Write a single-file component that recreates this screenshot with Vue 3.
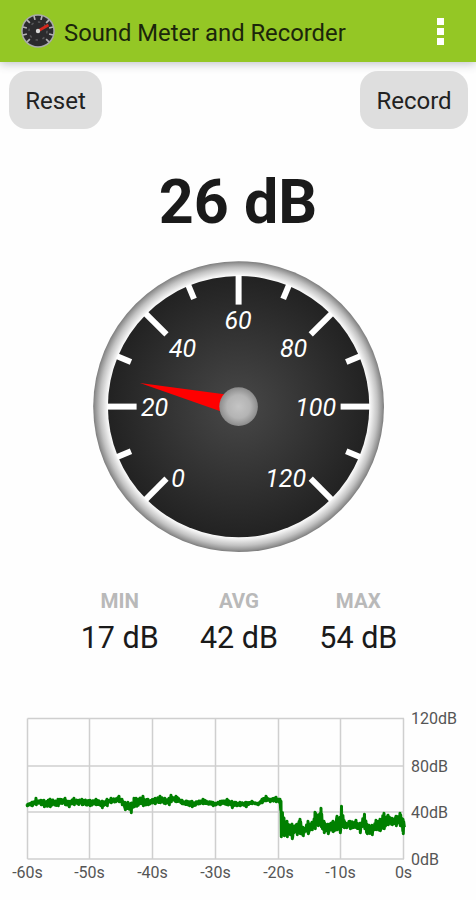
<template>
  <div class="app">
    <header class="toolbar">
      <svg class="logo" viewBox="0 0 36 36">
        <circle cx="18" cy="18" r="16.8" fill="#a9aaa9" />
        <circle cx="18" cy="18" r="15.3" fill="#2b2b2d" />
        <line
          v-for="a in logoTicks"
          :key="a"
          x1="18"
          y1="2.5"
          x2="18"
          y2="6.5"
          stroke="#b4b4b4"
          stroke-width="1.7"
          :transform="`rotate(${a} 18 18)`"
        />
        <circle cx="18" cy="18" r="9" fill="none" stroke="#58585a" stroke-width="1.5" stroke-dasharray="2.5 4.5" />
        <path d="M18 18 L28.5 12" stroke="#d5281c" stroke-width="2.6" />
        <circle cx="18" cy="18" r="2.2" fill="#d8d8d8" />
      </svg>
      <h1 class="title">Sound Meter and Recorder</h1>
      <div class="menu">
        <span></span>
        <span></span>
        <span></span>
      </div>
    </header>

    <div class="actions">
      <button class="btn">Reset</button>
      <button class="btn record">Record</button>
    </div>

    <div class="level">{{ level }} dB</div>

    <svg class="gauge" viewBox="-146.6 -146.6 292 292">
      <defs>
        <radialGradient id="rim" gradientUnits="userSpaceOnUse" cx="0" cy="0" r="145.4">
          <stop offset="0.895" stop-color="#ffffff" />
          <stop offset="0.915" stop-color="#ececec" />
          <stop offset="0.955" stop-color="#c2c2c2" />
          <stop offset="0.985" stop-color="#969696" />
          <stop offset="1" stop-color="#7c7c7c" />
        </radialGradient>
        <radialGradient id="face" gradientUnits="userSpaceOnUse" cx="0" cy="0" r="131">
          <stop offset="0" stop-color="#484848" />
          <stop offset="1" stop-color="#222222" />
        </radialGradient>
        <radialGradient id="hub">
          <stop offset="0" stop-color="#c4c4c4" />
          <stop offset="0.6" stop-color="#b4b4b4" />
          <stop offset="1" stop-color="#8c8c8c" />
        </radialGradient>
      </defs>
      <circle r="145.4" fill="url(#rim)" />
      <circle r="130.7" fill="url(#face)" />
      <line
        v-for="t in ticks"
        :key="t.angle"
        x1="0"
        x2="0"
        y1="-131.5"
        :y2="t.major ? -102 : -116.5"
        stroke="#fff"
        stroke-width="6"
        :transform="`rotate(${t.angle})`"
      />
      <text v-for="l in labels" :key="l.text" class="mark" :x="l.x" :y="l.y">{{ l.text }}</text>
      <path d="M0 -101.5 L10.5 0 L-10.5 0 Z" fill="#f00" :transform="`rotate(${needle})`" />
      <circle r="19.3" fill="url(#hub)" />
    </svg>

    <div class="stats">
      <div v-for="s in stats" :key="s.name" class="stat">
        <div class="stat-name">{{ s.name }}</div>
        <div class="stat-value">{{ s.value }} dB</div>
      </div>
    </div>

    <svg class="chart" viewBox="0 700 476 200">
      <g stroke="#cfcfcf" stroke-width="1.5">
        <line v-for="x in gridX" :key="'x' + x.pos" :x1="x.pos" :x2="x.pos" y1="718.5" y2="859" />
        <line v-for="y in gridY" :key="'y' + y.pos" x1="27.5" x2="404" :y1="y.pos" :y2="y.pos" />
      </g>
      <polyline :points="trace" fill="none" stroke="#008000" stroke-width="3" stroke-linejoin="round" />
      <text v-for="x in gridX" :key="x.text" class="axis middle" :x="x.pos" y="878">{{ x.text }}</text>
      <text v-for="y in gridY" :key="y.text" class="axis" x="411" :y="y.pos + 5.7">{{ y.text }}</text>
    </svg>
  </div>
</template>

<script setup>
import { computed, ref } from 'vue';

const level = ref(26);

const stats = [
  { name: 'MIN', value: 17 },
  { name: 'AVG', value: 42 },
  { name: 'MAX', value: 54 },
];

// 0 dB sits at -135 degrees, 120 dB at +135
const needle = computed(() => -135 + level.value * 2.25);

const ticks = Array.from({ length: 13 }, (_, i) => ({
  angle: -135 + i * 22.5,
  major: i % 2 === 0,
}));

const logoTicks = [-135, -105, -75, -45, -15, 15, 45, 75, 105, 135];

const labels = [
  { text: '0', x: -60.5, y: 80 },
  { text: '20', x: -84, y: 9 },
  { text: '40', x: -56, y: -50 },
  { text: '60', x: -0.5, y: -78 },
  { text: '80', x: 55, y: -50 },
  { text: '100', x: 77, y: 9 },
  { text: '120', x: 47, y: 80 },
];

const gridX = [
  { pos: 27.5, text: '-60s' },
  { pos: 89.5, text: '-50s' },
  { pos: 152.5, text: '-40s' },
  { pos: 215.5, text: '-30s' },
  { pos: 278.5, text: '-20s' },
  { pos: 340.5, text: '-10s' },
  { pos: 403.5, text: '0s' },
];

const gridY = [
  { pos: 718.5, text: '120dB' },
  { pos: 766, text: '80dB' },
  { pos: 812, text: '40dB' },
  { pos: 859, text: '0dB' },
];

// x, highest and lowest reading around it
const envelope = [
  [27, 803, 807], [32, 801, 807], [36, 797, 806], [41, 799, 806], [44, 799, 808], [50, 798, 808],
  [58, 798, 807], [65, 797, 806], [69, 800, 808], [74, 797, 806], [82, 798, 806], [90, 799, 807],
  [96, 798, 806], [102, 800, 809], [107, 798, 807], [111, 797, 804], [119, 795, 803], [122, 798, 806],
  [125, 801, 811], [128, 801, 810], [131, 802, 814], [134, 797, 808], [143, 795, 807], [148, 798, 806],
  [155, 797, 805], [160, 795, 804], [169, 797, 806], [171, 794, 803], [176, 795, 803], [182, 799, 805],
  [192, 800, 808], [203, 798, 805], [213, 801, 807], [220, 800, 806], [227, 798, 806], [232, 800, 809],
  [240, 801, 807], [246, 801, 808], [252, 800, 805], [258, 802, 806], [262, 798, 804], [266, 795, 802],
  [270, 798, 803], [276, 796, 803], [280, 798, 805], [281, 800, 838], [284, 817, 837], [287, 820, 838],
  [290, 824, 836], [292, 823, 840], [297, 823, 836], [300, 818, 835], [303, 826, 837], [308, 820, 835],
  [312, 821, 831], [315, 811, 830], [318, 814, 827], [321, 807, 828], [324, 820, 834], [328, 823, 835],
  [333, 820, 833], [337, 815, 831], [340, 816, 834], [341.5, 805, 828], [344, 819, 829], [350, 820, 830],
  [356, 819, 829], [360, 822, 834], [364.5, 813, 830], [367, 823, 835], [372, 824, 836], [376, 819, 831],
  [380, 818, 832], [384, 812, 830], [388, 814, 826], [392, 817, 826], [396, 815, 827], [400, 812, 827],
  [403, 818, 835], [404.5, 821, 830],
];

const trace = computed(() => {
  const points = [];
  let seed = 11;
  let up = true;
  for (let i = 0; i < envelope.length - 1; i++) {
    const [x1, top1, low1] = envelope[i];
    const [x2, top2, low2] = envelope[i + 1];
    points.push(`${x1},${top1 + 1.2}`, `${x1 + 0.3},${low1 - 1.2}`);
    for (let x = x1 + 0.7; x < x2; x += 0.7) {
      const k = (x - x1) / (x2 - x1);
      seed = (seed * 1103 + 377) % 9973;
      const top = top1 + (top2 - top1) * k + 1.5;
      const low = low1 + (low2 - low1) * k - 1.5;
      const shift = (seed / 9973) * (low - top) * 0.4;
      points.push(`${x.toFixed(1)},${(up ? top + shift : low - shift).toFixed(1)}`);
      up = !up;
    }
  }
  return points.join(' ');
});
</script>

<style>
body {
  margin: 0;
  background: #fefefe;
}
</style>

<style scoped>
.app {
  display: flex;
  flex-direction: column;
  width: 476px;
  height: 900px;
  overflow: hidden;
  background: #fefefe;
  color: #1a1a1a;
  font-family: Roboto, "Liberation Sans", sans-serif;
}

.toolbar {
  display: flex;
  align-items: center;
  flex: none;
  box-sizing: border-box;
  height: 62px;
  padding: 0 32px 0 20px;
  background: #94c725;
  box-shadow: 0 2px 9px rgba(50, 60, 80, 0.3);
}

.logo {
  width: 36px;
  height: 36px;
}

.title {
  margin: 3px 0 0 8px;
  font-size: 23.8px;
  font-weight: 400;
  line-height: 30px;
  white-space: nowrap;
  color: #1b260b;
}

.menu {
  display: flex;
  flex-direction: column;
  gap: 3px;
  margin-left: auto;
}

.menu span {
  width: 7px;
  height: 7px;
  background: #fff;
}

.actions {
  display: flex;
  justify-content: space-between;
  flex: none;
  padding: 9px 8px 0 9px;
}

.btn {
  width: 93px;
  height: 58px;
  padding: 2px 0 0;
  border: none;
  border-radius: 18px;
  background: #dedede;
  color: #222;
  font-family: inherit;
  font-size: 24px;
}

.record {
  width: 108px;
}

.level {
  flex: none;
  margin-top: 38px;
  font-size: 61px;
  font-weight: 700;
  line-height: 70px;
  text-align: center;
}

.gauge {
  flex: none;
  align-self: center;
  width: 292px;
  height: 292px;
  margin-top: 23px;
}

.mark {
  fill: #fff;
  font-size: 25px;
  font-style: italic;
  text-anchor: middle;
}

.stats {
  display: flex;
  flex: none;
  margin-top: 35px;
  padding: 0 58px 0 60px;
}

.stat {
  flex: 1;
  text-align: center;
}

.stat-name {
  color: #b9b9b9;
  font-size: 20.5px;
  font-weight: 700;
  line-height: 28px;
}

.stat-value {
  margin-top: 5px;
  font-size: 30.5px;
  line-height: 36px;
}

.chart {
  flex: none;
  width: 476px;
  height: 200px;
  margin-top: auto;
}

.axis {
  fill: #555;
  font-size: 16px;
}

.middle {
  text-anchor: middle;
}
</style>
